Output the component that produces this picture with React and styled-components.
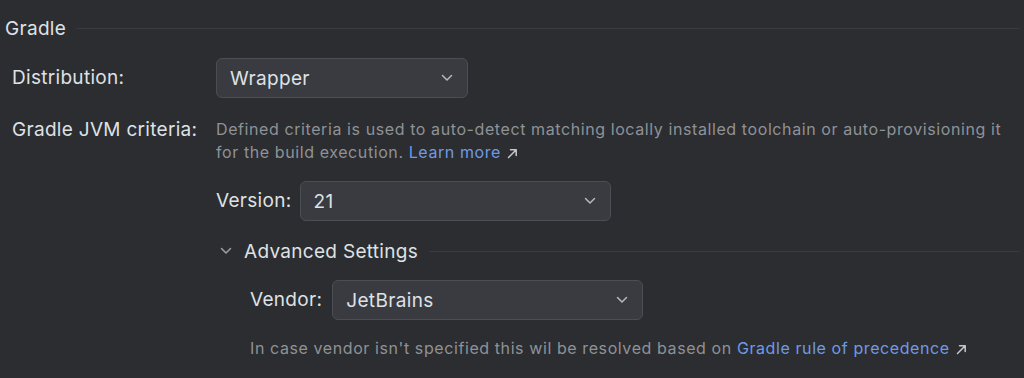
import * as React from 'react';
import styled, { createGlobalStyle } from "styled-components"

const GlobalStyle = createGlobalStyle`
  html, body {
    margin: 0;
    padding: 0;
    background: #2b2d30;
  }
  body {
    font-family: 'Inter', 'Noto Sans', sans-serif;
    -webkit-font-smoothing: antialiased;
  }
`

const Page = styled.div`
  width: 1024px;
  height: 378px;
  overflow: hidden;
  background: #2b2d30;
  color: #dfe1e5;
  padding: 17px 4px 0 5px;
  box-sizing: border-box;
`

const GroupHeader = styled.div`
  display: flex;
  flex: 1;
  align-items: center;
  gap: ${(props) => props.gap || 10}px;
  height: 22px;
  font-size: 19px;
  letter-spacing: 0.3px;
  color: #dfe1e5;
`

const Line = styled.div`
  flex: 1;
  height: 1px;
  background: #393b40;
`

const FormGrid = styled.div`
  display: grid;
  grid-template-columns: 204px 1fr;
  align-items: start;
  padding-left: 7px;
  margin-top: ${(props) => props.mt || 0}px;
`

const Label = styled.div`
  font-size: 19px;
  letter-spacing: 0.3px;
  color: #dfe1e5;
  height: ${(props) => props.h || 40}px;
  line-height: ${(props) => props.h || 40}px;
  white-space: nowrap;
`

const Row = styled.div`
  display: flex;
  align-items: center;
  gap: ${(props) => props.gap || 9}px;
  margin-top: ${(props) => props.mt || 0}px;
  padding-left: ${(props) => props.indent || 0}px;
`

const ComboBox = styled.div`
  width: ${(props) => props.w}px;
  height: 40px;
  box-sizing: border-box;
  border: 1px solid #4b4e54;
  border-radius: 6px;
  background: #393b40;
  display: flex;
  align-items: center;
  justify-content: space-between;
  padding: 0 14px 0 13px;
  font-size: 19px;
  letter-spacing: 0.35px;
  color: #dfe1e5;
`

const Description = styled.div`
  font-size: 16px;
  letter-spacing: 0.59px;
  line-height: 23px;
  color: #8f9297;
  white-space: nowrap;
`

const Link = styled.a`
  color: #6e9be6;
  text-decoration: none;
`

const Arrow = styled.svg`
  margin-left: 6px;
  vertical-align: -1px;
`

const Fold = styled.svg`
  flex: none;
`

function Chevron() {
  return (
    <svg width="12" height="8" viewBox="0 0 12 8" fill="none">
      <path d="M1.5 1.5 L6 6 L10.5 1.5" stroke="#b4b8bf" strokeWidth="1.5" strokeLinecap="round" strokeLinejoin="round" />
    </svg>
  )
}

function ExternalArrow() {
  return (
    <Arrow width="11" height="11" viewBox="0 0 11 11" fill="none">
      <path d="M1.5 9.5 L9 2 M3.5 1.8 H9.2 V7.5" stroke="#c5c8cd" strokeWidth="1.5" strokeLinecap="round" strokeLinejoin="round" />
    </Arrow>
  )
}

function Select({ width, value }) {
  return (
    <ComboBox w={width}>
      <span>{value}</span>
      <Chevron />
    </ComboBox>
  )
}

export default function App() {
  return (
    <Page>
      <GlobalStyle />
      <GroupHeader>
        <span>Gradle</span>
        <Line />
      </GroupHeader>

      <FormGrid mt={19}>
        <Label>Distribution:</Label>
        <Select width={252} value="Wrapper" />
      </FormGrid>

      <FormGrid mt={20}>
        <Label h={23}>Gradle JVM criteria:</Label>
        <div>
          <Description>
            Defined criteria is used to auto-detect matching locally installed toolchain or auto-provisioning it
            <br />
            for the build execution. <Link>Learn more</Link>
            <ExternalArrow />
          </Description>

          <Row mt={17} gap={8}>
            <Label>Version:</Label>
            <Select width={311} value="21" />
          </Row>

          <Row mt={19} gap={12} indent={4}>
            <Fold width="12" height="8" viewBox="0 0 12 8" fill="none">
              <path d="M1.5 1.5 L6 6 L10.5 1.5" stroke="#9da0a8" strokeWidth="1.5" strokeLinecap="round" strokeLinejoin="round" />
            </Fold>
            <GroupHeader gap={11}>
              <span>Advanced Settings</span>
              <Line />
            </GroupHeader>
          </Row>

          <Row mt={18} gap={10} indent={34}>
            <Label>Vendor:</Label>
            <Select width={311} value="JetBrains" />
          </Row>

          <Row mt={17} indent={34}>
            <Description>
              In case vendor isn't specified this wil be resolved based on <Link>Gradle rule of precedence</Link>
              <ExternalArrow />
            </Description>
          </Row>
        </div>
      </FormGrid>
    </Page>
  )
}
